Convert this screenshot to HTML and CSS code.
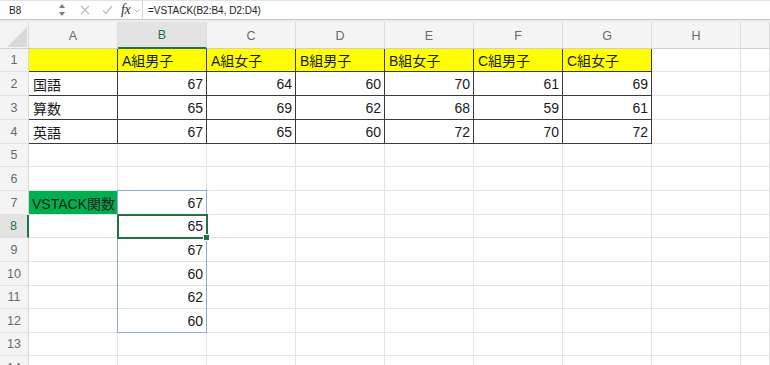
FILE: index.html
```html
<!DOCTYPE html>
<html lang="ja">
<head>
<meta charset="utf-8">
<link rel="stylesheet" href="styles.css">
</head>
<body>
<div class="app">
  <div class="fbar">
    <div class="namebox">B8</div>
    <div class="spin">
      <svg width="6" height="14" viewBox="0 0 6 14"><path d="M0 5 L3 1 L6 5 Z" fill="#7a7a7a"/><path d="M0 9 L3 13 L6 9 Z" fill="#7a7a7a"/></svg>
    </div>
    <div class="tools">
      <svg class="ic-x" width="10" height="10" viewBox="0 0 10 10"><path d="M1 1 L9 9 M9 1 L1 9" stroke="#bdbdbd" stroke-width="1.3" fill="none"/></svg>
      <svg class="ic-ok" width="11" height="10" viewBox="0 0 11 10"><path d="M1 5.5 L4 8.5 L10 1" stroke="#bdbdbd" stroke-width="1.3" fill="none"/></svg>
      <span class="fx">fx</span>
      <svg class="ic-caret" width="6" height="4" viewBox="0 0 6 4"><path d="M0.5 0.5 L3 3 L5.5 0.5" stroke="#b8b8b8" stroke-width="1" fill="none"/></svg>
    </div>
    <div class="formula">=VSTACK(B2:B4, D2:D4)</div>
  </div>
  <div class="strip"></div>
  <div class="sheet">
    <div class="corner"><svg width="20" height="20" viewBox="0 0 20 20"><path d="M20 0 L20 20 L0 20 Z" fill="#d9d9d9"/></svg></div>
    <div class="ch">A</div><div class="ch sel">B</div><div class="ch">C</div><div class="ch">D</div><div class="ch">E</div><div class="ch">F</div><div class="ch">G</div><div class="ch">H</div><div class="ch"></div>

    <div class="rh">1</div>
    <div class="c t y"></div><div class="c t y">A組男子</div><div class="c t y">A組女子</div><div class="c t y">B組男子</div><div class="c t y">B組女子</div><div class="c t y">C組男子</div><div class="c t y">C組女子</div><div class="c"></div><div class="c"></div>

    <div class="rh">2</div>
    <div class="c t">国語</div><div class="c t n">67</div><div class="c t n">64</div><div class="c t n">60</div><div class="c t n">70</div><div class="c t n">61</div><div class="c t n">69</div><div class="c"></div><div class="c"></div>

    <div class="rh">3</div>
    <div class="c t">算数</div><div class="c t n">65</div><div class="c t n">69</div><div class="c t n">62</div><div class="c t n">68</div><div class="c t n">59</div><div class="c t n">61</div><div class="c"></div><div class="c"></div>

    <div class="rh">4</div>
    <div class="c t">英語</div><div class="c t n">67</div><div class="c t n">65</div><div class="c t n">60</div><div class="c t n">72</div><div class="c t n">70</div><div class="c t n">72</div><div class="c"></div><div class="c"></div>

    <div class="rh">5</div>
    <div class="c"></div><div class="c"></div><div class="c"></div><div class="c"></div><div class="c"></div><div class="c"></div><div class="c"></div><div class="c"></div><div class="c"></div>

    <div class="rh">6</div>
    <div class="c"></div><div class="c"></div><div class="c"></div><div class="c"></div><div class="c"></div><div class="c"></div><div class="c"></div><div class="c"></div><div class="c"></div>

    <div class="rh">7</div>
    <div class="c g">VSTACK関数</div><div class="c n">67</div><div class="c"></div><div class="c"></div><div class="c"></div><div class="c"></div><div class="c"></div><div class="c"></div><div class="c"></div>

    <div class="rh sel">8</div>
    <div class="c"></div><div class="c n">65</div><div class="c"></div><div class="c"></div><div class="c"></div><div class="c"></div><div class="c"></div><div class="c"></div><div class="c"></div>

    <div class="rh">9</div>
    <div class="c"></div><div class="c n">67</div><div class="c"></div><div class="c"></div><div class="c"></div><div class="c"></div><div class="c"></div><div class="c"></div><div class="c"></div>

    <div class="rh">10</div>
    <div class="c"></div><div class="c n">60</div><div class="c"></div><div class="c"></div><div class="c"></div><div class="c"></div><div class="c"></div><div class="c"></div><div class="c"></div>

    <div class="rh">11</div>
    <div class="c"></div><div class="c n">62</div><div class="c"></div><div class="c"></div><div class="c"></div><div class="c"></div><div class="c"></div><div class="c"></div><div class="c"></div>

    <div class="rh">12</div>
    <div class="c"></div><div class="c n">60</div><div class="c"></div><div class="c"></div><div class="c"></div><div class="c"></div><div class="c"></div><div class="c"></div><div class="c"></div>

    <div class="rh">13</div>
    <div class="c"></div><div class="c"></div><div class="c"></div><div class="c"></div><div class="c"></div><div class="c"></div><div class="c"></div><div class="c"></div><div class="c"></div>

    <div class="rh">14</div>
    <div class="c"></div><div class="c"></div><div class="c"></div><div class="c"></div><div class="c"></div><div class="c"></div><div class="c"></div><div class="c"></div><div class="c"></div>

    <div class="spill"></div>
    <div class="selbox"><span class="handle"></span></div>
  </div>
</div>
</body>
</html>
```

FILE: styles.css
```css
html, body {
  margin: 0;
  padding: 0;
  background: #ffffff;
}
.app {
  width: 770px;
  height: 365px;
  overflow: hidden;
  font-family: "Liberation Sans", "Noto Sans CJK JP", sans-serif;
}
.fbar {
  height: 20px;
  box-sizing: border-box;
  border-top: 1px solid #e2e2e2;
  border-bottom: 1px solid #c9c9c9;
  display: flex;
  align-items: center;
  background: #fff;
}
.namebox {
  width: 59px;
  box-sizing: border-box;
  padding-left: 9px;
  font-size: 10px;
  color: #222;
}
.spin {
  width: 8px;
  display: flex;
  align-items: center;
}
.spin svg { display: block; }
.tools {
  width: 76px;
  height: 18px;
  display: flex;
  align-items: center;
  box-sizing: border-box;
  border-right: 1px solid #d6d6d6;
  padding-left: 13px;
}
.ic-x { margin-right: 12px; display: block; }
.ic-ok { margin-right: 8px; display: block; }
.fx {
  font-family: "Liberation Serif", serif;
  font-style: italic;
  font-size: 14px;
  color: #333;
  margin-right: 4px;
  letter-spacing: -0.5px;
}
.ic-caret { display: block; margin-top: 2px; }
.formula {
  padding-left: 5px;
  font-size: 10px;
  color: #222;
  white-space: nowrap;
}
.strip {
  height: 2px;
  background: #ececec;
}
.sheet {
  position: relative;
  display: grid;
  grid-template-columns: 29px repeat(8, 89px) 1fr;
  grid-template-rows: 27px 23px 24px 24px 24px 23px 24px 24px 23px 24px 24px 23px 24px 23px 24px;
}
.corner {
  background: #f3f3f3;
  border-right: 1px solid #d9d9d9;
  border-bottom: 1px solid #d0d0d0;
  display: flex;
  align-items: flex-end;
  justify-content: flex-end;
  padding: 0 1px 1px 0;
}
.corner svg { display: block; }
.ch {
  background: #f4f4f4;
  border-right: 1px solid #dcdcdc;
  border-bottom: 1px solid #d0d0d0;
  color: #6a6a6a;
  font-size: 12.5px;
  display: flex;
  align-items: center;
  justify-content: center;
  padding-top: 1px;
}
.ch.sel {
  background: #e3e3e3;
  color: #217346;
  border-bottom: 2px solid #217346;
}
.rh {
  background: #f4f4f4;
  border-right: 1px solid #d9d9d9;
  border-bottom: 1px solid #e2e2e2;
  color: #6a6a6a;
  font-size: 12.5px;
  display: flex;
  align-items: center;
  justify-content: center;
}
.rh.sel {
  background: #e3e3e3;
  color: #217346;
  border-right: 2px solid #217346;
}
.c {
  border-right: 1px solid #e2e2e2;
  border-bottom: 1px solid #e2e2e2;
  font-size: 14px;
  color: #1a1a1a;
  display: flex;
  align-items: center;
  padding: 0 3px 0 4px;
  white-space: nowrap;
  overflow: hidden;
}
.c.t {
  border-right-color: #3a3a3a;
  border-bottom-color: #3a3a3a;
}
.c.y { background: #ffff00; }
.c.g { background: #00b050; padding-left: 3px; }
.c.n { justify-content: flex-end; }
.spill {
  position: absolute;
  grid-column: 3 / 4;
  grid-row: 8 / 14;
  top: -1px;
  left: -1px;
  right: 0;
  bottom: 0;
  border: 1px solid #8fa9d8;
  pointer-events: none;
}
.selbox {
  position: absolute;
  grid-column: 3 / 4;
  grid-row: 9 / 10;
  top: -1px;
  left: -1px;
  right: -1px;
  bottom: -1px;
  border: 2px solid #217346;
  pointer-events: none;
}
.handle {
  position: absolute;
  right: -4px;
  bottom: -4px;
  width: 5px;
  height: 5px;
  background: #217346;
  border: 1px solid #fff;
}
```
